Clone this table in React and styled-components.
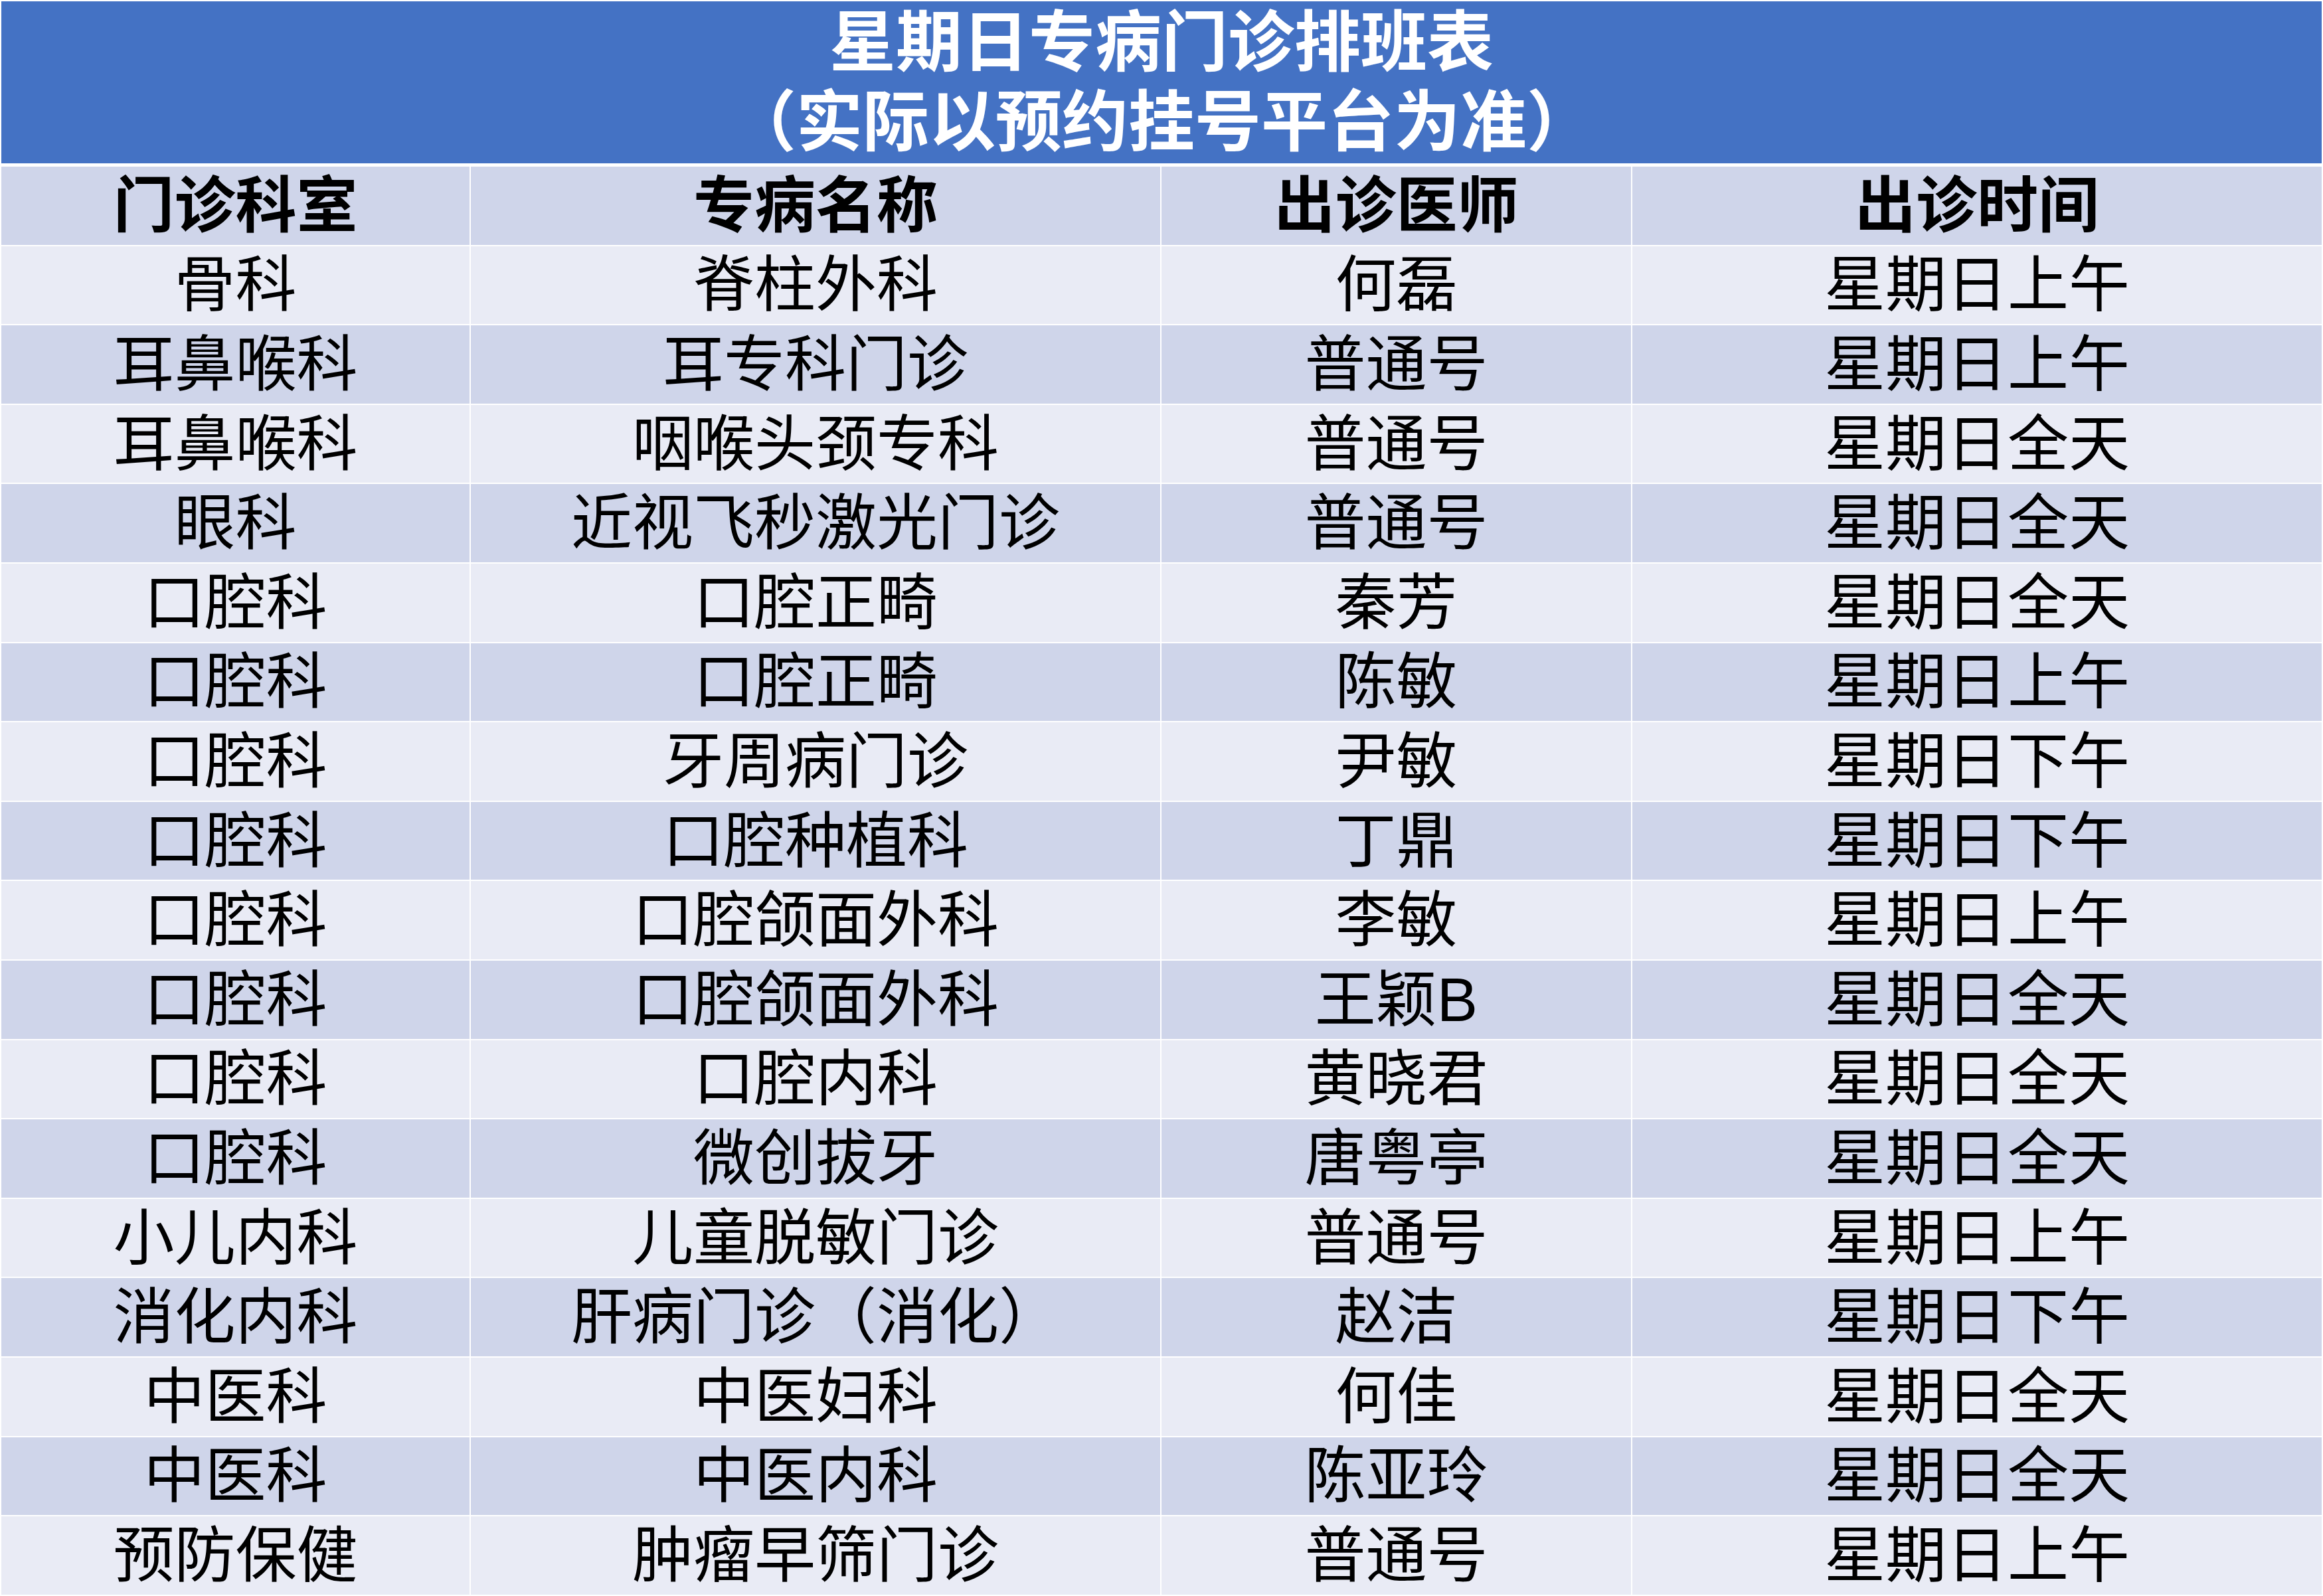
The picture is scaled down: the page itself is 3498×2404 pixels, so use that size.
import React from 'react'
import styled, { createGlobalStyle } from 'styled-components'

const GlobalStyle = createGlobalStyle`
  html, body {
    margin: 0;
    padding: 0;
    background: #ffffff;
  }
  body {
    font-family: "Liberation Sans", "Noto Sans CJK SC", sans-serif;
    color: #000;
  }
`

const Page = styled.div`
  width: 3494px;
  padding: 2px;
  background: #ffffff;
`

const Title = styled.div`
  height: 244px;
  background: #4472c4;
  color: #ffffff;
  font-size: 100px;
  font-weight: 700;
  line-height: 120px;
  text-align: center;
  display: flex;
  flex-direction: column;
  justify-content: center;
  margin-bottom: 5px;
`

const Table = styled.div`
  display: flex;
  flex-direction: column;
  gap: 2px;
`

const Row = styled.div`
  display: grid;
  grid-template-columns: 705px 1038px 707px 1038px;
  gap: 2px;
  height: 117.6px;
`

const Cell = styled.div`
  background: ${p => (p.$band ? '#cfd5ea' : '#e9ebf5')};
  font-size: 92px;
  font-weight: ${p => (p.$head ? 700 : 400)};
  line-height: 1;
  display: flex;
  align-items: center;
  justify-content: center;
  white-space: nowrap;
`

const head = ['门诊科室', '专病名称', '出诊医师', '出诊时间']

const rows = [
  ['骨科', '脊柱外科', '何磊', '星期日上午'],
  ['耳鼻喉科', '耳专科门诊', '普通号', '星期日上午'],
  ['耳鼻喉科', '咽喉头颈专科', '普通号', '星期日全天'],
  ['眼科', '近视飞秒激光门诊', '普通号', '星期日全天'],
  ['口腔科', '口腔正畸', '秦芳', '星期日全天'],
  ['口腔科', '口腔正畸', '陈敏', '星期日上午'],
  ['口腔科', '牙周病门诊', '尹敏', '星期日下午'],
  ['口腔科', '口腔种植科', '丁鼎', '星期日下午'],
  ['口腔科', '口腔颌面外科', '李敏', '星期日上午'],
  ['口腔科', '口腔颌面外科', '王颖B', '星期日全天'],
  ['口腔科', '口腔内科', '黄晓君', '星期日全天'],
  ['口腔科', '微创拔牙', '唐粤亭', '星期日全天'],
  ['小儿内科', '儿童脱敏门诊', '普通号', '星期日上午'],
  ['消化内科', '肝病门诊（消化）', '赵洁', '星期日下午'],
  ['中医科', '中医妇科', '何佳', '星期日全天'],
  ['中医科', '中医内科', '陈亚玲', '星期日全天'],
  ['预防保健', '肿瘤早筛门诊', '普通号', '星期日上午'],
]

const App = () => {
  return (
    <>
      <GlobalStyle />
      <Page>
        <Title>
          <div>星期日专病门诊排班表</div>
          <div>（实际以预约挂号平台为准）</div>
        </Title>
        <Table>
          <Row>
            {head.map(h => (
              <Cell key={h} $band $head>{h}</Cell>
            ))}
          </Row>
          {rows.map((r, i) => (
            <Row key={i}>
              {r.map((c, j) => (
                <Cell key={j} $band={i % 2 === 1}>{c}</Cell>
              ))}
            </Row>
          ))}
        </Table>
      </Page>
    </>
  )
}

export default App
